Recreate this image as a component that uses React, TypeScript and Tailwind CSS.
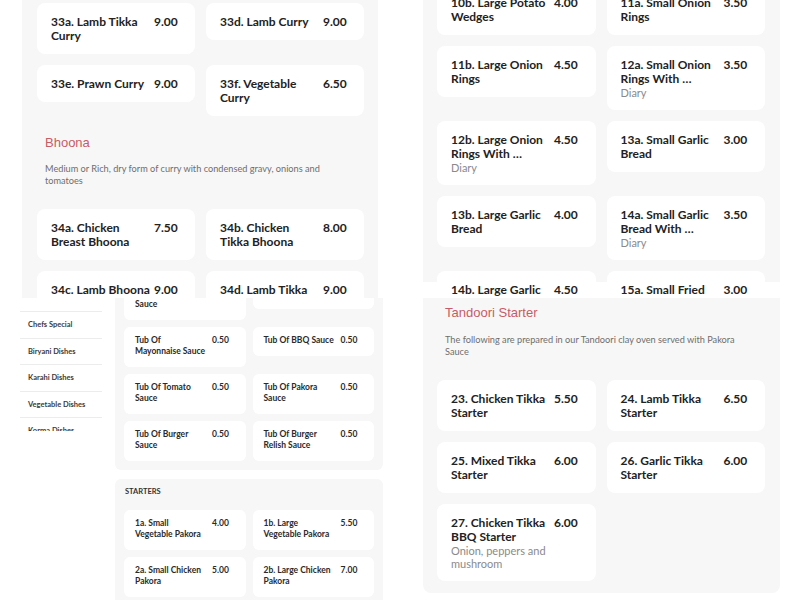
import React from 'react'

// ---- Types ----
interface Item { name: string; price: string; desc?: string }

// ---- Data ----
const curry: Item[] = [
  { name: '33a. Lamb Tikka Curry', price: '9.00' },
  { name: '33d. Lamb Curry', price: '9.00' },
  { name: '33e. Prawn Curry', price: '9.00' },
  { name: '33f. Vegetable Curry', price: '6.50' },
]
const bhoona: Item[] = [
  { name: '34a. Chicken Breast Bhoona', price: '7.50' },
  { name: '34b. Chicken Tikka Bhoona', price: '8.00' },
  { name: '34c. Lamb Bhoona', price: '9.00' },
  { name: '34d. Lamb Tikka Bhoona', price: '9.00' },
]
const sides: Item[] = [
  { name: '10b. Large Potato Wedges', price: '4.00' },
  { name: '11a. Small Onion Rings', price: '3.50' },
  { name: '11b. Large Onion Rings', price: '4.50' },
  { name: '12a. Small Onion Rings With …', price: '3.50', desc: 'Diary' },
  { name: '12b. Large Onion Rings With …', price: '4.50', desc: 'Diary' },
  { name: '13a. Small Garlic Bread', price: '3.00' },
  { name: '13b. Large Garlic Bread', price: '4.00' },
  { name: '14a. Small Garlic Bread With …', price: '3.50', desc: 'Diary' },
  { name: '14b. Large Garlic Bread With …', price: '4.50', desc: 'Diary' },
  { name: '15a. Small Fried Mushrooms', price: '3.00' },
]
const tandoori: Item[] = [
  { name: '23. Chicken Tikka Starter', price: '5.50' },
  { name: '24. Lamb Tikka Starter', price: '6.50' },
  { name: '25. Mixed Tikka Starter', price: '6.00' },
  { name: '26. Garlic Tikka Starter', price: '6.00' },
  { name: '27. Chicken Tikka BBQ Starter', price: '6.00', desc: 'Onion, peppers and mushroom' },
]
const sauces: Item[] = [
  { name: 'Tub Of Curry Sauce', price: '0.50' },
  { name: 'Tub Of Chilli Sauce', price: '0.50' },
  { name: 'Tub Of Mayonnaise Sauce', price: '0.50' },
  { name: 'Tub Of BBQ Sauce', price: '0.50' },
  { name: 'Tub Of Tomato Sauce', price: '0.50' },
  { name: 'Tub Of Pakora Sauce', price: '0.50' },
  { name: 'Tub Of Burger Sauce', price: '0.50' },
  { name: 'Tub Of Burger Relish Sauce', price: '0.50' },
]
const starters: Item[] = [
  { name: '1a. Small Vegetable Pakora', price: '4.00' },
  { name: '1b. Large Vegetable Pakora', price: '5.50' },
  { name: '2a. Small Chicken Pakora', price: '5.00' },
  { name: '2b. Large Chicken Pakora', price: '7.00' },
]
const nav = ['Chefs Special', 'Biryani Dishes', 'Karahi Dishes', 'Vegetable Dishes', 'Korma Dishes']

// ---- Cards ----
const Card = ({ item }: { item: Item }) => (
  <div className="bg-white rounded-[8px] pt-[12px] pb-[11px] pl-[14px] flex items-start">
    <div className="w-[99px]">
      <p className="text-[12px] font-bold leading-[14px] text-[#222]">{item.name}</p>
      {item.desc && <p className="text-[11px] leading-[13px] text-[#8a8a8a]">{item.desc}</p>}
    </div>
    <p className="ml-[4px] text-[12px] font-bold leading-[14px] text-[#222]">{item.price}</p>
  </div>
)

const SmallCard = ({ item }: { item: Item }) => (
  <div className="bg-white rounded-[6px] pt-[8px] pb-[10px] pl-[11px] flex items-start">
    <p className="w-[72px] text-[8.5px] font-bold leading-[11px] text-[#2a2a2a]">{item.name}</p>
    <p className="ml-[5px] text-[8.5px] font-bold leading-[11px] text-[#2a2a2a]">{item.price}</p>
  </div>
)

const Grid = ({ items, className = '' }: { items: Item[]; className?: string }) => (
  <div className={`grid grid-cols-2 gap-[11px] items-start ${className}`}>
    {items.map(i => <Card key={i.name} item={i} />)}
  </div>
)

const SmallGrid = ({ items, className = '' }: { items: Item[]; className?: string }) => (
  <div className={`grid grid-cols-2 gap-[7px] items-start ${className}`}>
    {items.map(i => <SmallCard key={i.name} item={i} />)}
  </div>
)

const Heading = ({ children }: { children: React.ReactNode }) => (
  <h2 className="pl-[8px] text-[13px] leading-[16px] text-[#c75b67] font-['Liberation_Sans',Arial,sans-serif]">
    {children}
  </h2>
)

const Desc = ({ children, className = '' }: { children: React.ReactNode; className?: string }) => (
  <p className={`pl-[8px] w-[315px] text-[9.2px] leading-[11.5px] text-[#6e6e6e] ${className}`}>{children}</p>
)

export default function App() {
  return (
    <div className="w-[800px] h-[600px] bg-white grid grid-cols-[400px_400px] grid-rows-[298px_302px] overflow-hidden font-['Lato',sans-serif]">

      {/* Curry / Bhoona */}
      <div className="overflow-hidden">
        <div className="ml-[22px] w-[356px] h-full bg-[#f7f7f7] pl-[15px] pr-[14px] pt-[3px]">
          <Grid items={curry} />
          <div className="mt-[19px]"><Heading>Bhoona</Heading></div>
          <Desc className="mt-[12px]">Medium or Rich, dry form of curry with condensed gravy, onions and tomatoes</Desc>
          <Grid items={bhoona} className="mt-[23px]" />
        </div>
      </div>

      {/* Sides */}
      <div className="overflow-hidden">
        <div className="ml-[23px] w-[357px] h-full bg-[#f7f7f7] pl-[14px] pr-[15px]">
          <Grid items={sides} className="-mt-[16px]" />
        </div>
      </div>

      {/* Sidebar + sauces */}
      <div className="overflow-hidden flex items-start">
        <div className="ml-[20px] w-[82px] h-[133px] overflow-hidden">
          <ul className="mt-[13px] border-t border-[#ececec]">
            {nav.map(n => (
              <li key={n} className="h-[26.5px] flex items-center pl-[8px] border-b border-[#ececec] text-[7.5px] font-bold text-[#3a3a3a]">
                {n}
              </li>
            ))}
          </ul>
        </div>
        <div className="ml-[13px] w-[268px]">
          <div className="h-[172px] bg-[#f7f7f7] rounded-b-[6px] overflow-hidden px-[9px]">
            <SmallGrid items={sauces} className="-mt-[18px]" />
          </div>
          <div className="mt-[9px] bg-[#f7f7f7] rounded-t-[6px] px-[9px] pt-[9px] pb-[10px]">
            <p className="pl-[1px] text-[7.5px] leading-[8px] font-bold text-[#333]">STARTERS</p>
            <SmallGrid items={starters} className="mt-[14px]" />
          </div>
        </div>
      </div>

      {/* Tandoori */}
      <div className="overflow-hidden">
        <div className="ml-[23px] w-[357px] h-[295px] bg-[#f7f7f7] rounded-b-[8px] pl-[14px] pr-[15px] pt-[7px]">
          <Heading>Tandoori Starter</Heading>
          <Desc className="mt-[13px]">The following are prepared in our Tandoori clay oven served with Pakora Sauce</Desc>
          <Grid items={tandoori} className="mt-[23px]" />
        </div>
      </div>

    </div>
  )
}
